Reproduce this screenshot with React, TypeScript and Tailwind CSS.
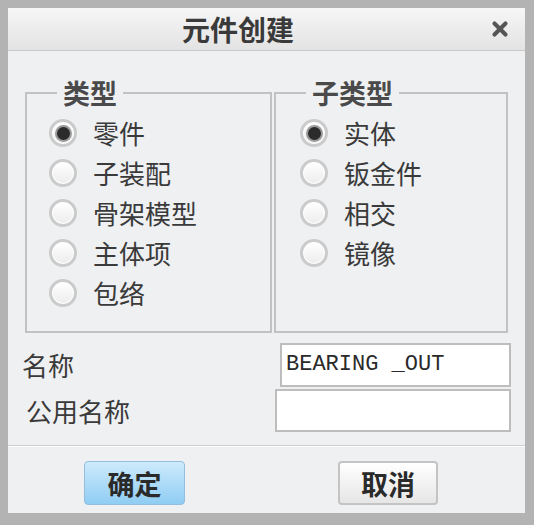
import { X } from 'lucide-react';

const cjk = { fontFamily: '"Noto Sans CJK SC", "Noto Sans", sans-serif' };

const Radio = ({ label, checked }: { label: string; checked?: boolean }) => (
  <div className="flex h-[40px] items-center">
    <span className="flex h-[28px] w-[28px] items-center justify-center rounded-full border-[3px] border-[#cbcbcb] bg-gradient-to-b from-white to-[#ececec] shadow-[inset_0_0_0_1px_#ffffff]">
      {checked && (
        <span className="h-[13px] w-[13px] rounded-full bg-[#2b2b2b] shadow-[0_0_0_2px_#9a9a9a]" />
      )}
    </span>
    <span className="ml-[16px] text-[26px] leading-none text-[#3a3a3a]">{label}</span>
  </div>
);

const GroupBox = ({
  title,
  items,
  width,
  legendOffset,
  radioOffset,
}: {
  title: string;
  items: string[];
  width: string;
  legendOffset: string;
  radioOffset: string;
}) => (
  <fieldset className={`h-[255px] border-2 border-[#c2c2c2] ${width}`}>
    <legend className={`px-[6px] text-[27px] font-bold leading-[30px] text-[#4a4a4a] ${legendOffset}`}>
      {title}
    </legend>
    <div className={`pt-[5px] ${radioOffset}`}>
      {items.map((it, i) => (
        <Radio key={it} label={it} checked={i === 0} />
      ))}
    </div>
  </fieldset>
);

export default function App() {
  return (
    <div
      className="flex h-[525px] w-[534px] flex-col border-b-[12px] border-l-[8px] border-r-[9px] border-t-[8px] border-[#b3b3b3] bg-[#eef0f2]"
      style={cjk}
    >
      {/* title bar */}
      <div className="relative flex h-[43px] shrink-0 items-center border-b border-[#c9c9c9] bg-gradient-to-b from-[#f6f6f6] to-[#e3e3e3] pl-[174px]">
        <span className="text-[28px] font-bold leading-none text-[#3a3a3a]">元件创建</span>
        <X className="absolute right-[14px] top-[10px] h-[22px] w-[22px] text-[#555555]" strokeWidth={4.5} />
      </div>

      {/* group boxes */}
      <div className="flex gap-[2px] pl-[17px] pt-[27px]">
        <GroupBox
          title="类型"
          items={['零件', '子装配', '骨架模型', '主体项', '包络']}
          width="w-[247px]"
          legendOffset="ml-[30px]"
          radioOffset="pl-[22px]"
        />
        <GroupBox
          title="子类型"
          items={['实体', '钣金件', '相交', '镜像']}
          width="w-[234px]"
          legendOffset="ml-[30px]"
          radioOffset="pl-[24px]"
        />
      </div>

      {/* name fields */}
      <div className="mt-[10px] flex h-[44px] items-center justify-between pl-[14px] pr-[14px]">
        <span className="text-[26px] leading-none text-[#3a3a3a]">名称</span>
        <div className="flex h-[44px] w-[231px] items-center border-2 border-[#bdbdbd] bg-white pl-[4px]">
          <span
            className="text-[22px] leading-none text-[#2a2a2a]"
            style={{ fontFamily: '"Liberation Mono", "DejaVu Sans Mono", monospace' }}
          >
            BEARING _OUT
          </span>
        </div>
      </div>
      <div className="mt-[2px] flex h-[43px] items-center justify-between pl-[18px] pr-[14px]">
        <span className="text-[26px] leading-none text-[#3a3a3a]">公用名称</span>
        <div className="h-[43px] w-[236px] border-2 border-[#bdbdbd] bg-white" />
      </div>

      {/* footer */}
      <div className="mt-[13px] flex flex-1 items-start border-t border-[#cfcfcf] pl-[76px] pt-[15px] shadow-[inset_0_1px_0_#ffffff]">
        <button className="flex h-[44px] w-[101px] items-center justify-center rounded-[4px] border border-[#93bfdc] bg-gradient-to-b from-[#cdeafc] to-[#8fcdf3] text-[27px] font-bold leading-none text-[#2a2a2a]">
          确定
        </button>
        <button className="ml-[153px] flex h-[44px] w-[100px] items-center justify-center rounded-[4px] border-2 border-[#c4c4c4] bg-gradient-to-b from-white to-[#e6e6e6] text-[27px] font-bold leading-none text-[#2a2a2a]">
          取消
        </button>
      </div>
    </div>
  );
}
